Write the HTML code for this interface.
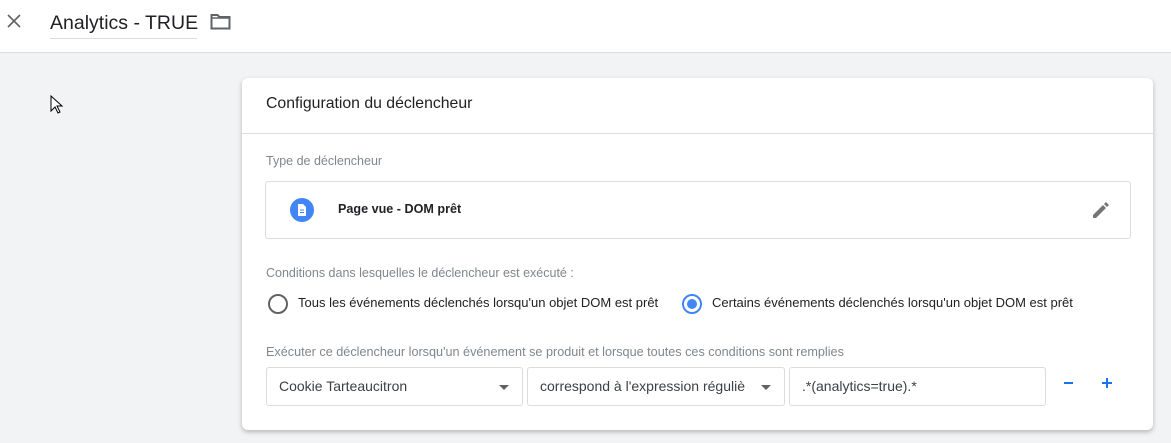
<!DOCTYPE html><html><head><style>
body{margin:0;width:1171px;height:443px;background:#f1f3f4;font-family:"Liberation Sans",Arial,sans-serif;position:relative;overflow:hidden;color:#202124}
.a{position:absolute;white-space:nowrap}
.top{position:absolute;left:0;top:0;width:1171px;height:52px;background:#fff;border-bottom:1px solid #dadce0}
.card{position:absolute;left:242px;top:78px;width:911px;height:352px;background:#fff;border-radius:6px;box-shadow:0 2px 5px rgba(0,0,0,.25)}
.box{position:absolute;border:1px solid #dadce0;border-radius:3px;background:#fff;box-sizing:border-box}
.lab{font-size:12.5px;color:#80868b}
.fld{font-size:14px;color:#3c4043}
</style></head><body>
<div class="top">
<svg class="a" style="left:7px;top:14px" width="14" height="14" viewBox="0 0 14 14"><path d="M1 1L13 13M13 1L1 13" stroke="#5f6368" stroke-width="1.6"/></svg>
<div class="a" style="left:50px;top:12px;font-size:19.5px;color:#202124">Analytics - TRUE</div>
<div class="a" style="left:50px;top:38px;width:147px;height:1px;background:#dadce0"></div>
<svg class="a" style="left:210px;top:13px" width="21" height="17" viewBox="0 0 21 17"><path d="M1.5 2h6l2 2h10v11.5h-18z" fill="none" stroke="#5f6368" stroke-width="2"/><path d="M1.5 5h18" stroke="#5f6368" stroke-width="1.5"/></svg>
</div>
<svg class="a" style="left:50px;top:95px" width="14" height="20" viewBox="0 0 14 20"><path d="M1 1v15l4-4 3 6 2-1-3-6h5z" fill="#fff" stroke="#000" stroke-width="1"/></svg>
<div class="card">
<div class="a" style="left:24px;top:17px;font-size:15.8px;color:#202124">Configuration du déclencheur</div>
<div class="a" style="left:0;top:55px;width:911px;height:1px;background:#dadce0"></div>
<div class="a lab" style="left:24px;top:76px">Type de déclencheur</div>
<div class="box" style="left:23px;top:103px;width:866px;height:58px">
<svg class="a" style="left:24px;top:16px" width="24" height="24" viewBox="0 0 24 24"><circle cx="12" cy="12" r="12" fill="#4285f4"/><path d="M8 6h5l3 3v9H8z" fill="#fff"/><path d="M10 12h4M10 14.5h4" stroke="#4285f4" stroke-width="1"/></svg>
<div class="a" style="left:72px;top:20px;font-size:12.6px;font-weight:bold">Page vue - DOM prêt</div>
<svg class="a" style="left:826px;top:19px" width="18" height="18" viewBox="0 0 18 18"><path d="M1 14v3h3l10-10-3-3zM12 3l3 3 2-2-3-3z" fill="#757575"/></svg>
</div>
<div class="a lab" style="left:24px;top:188px">Conditions dans lesquelles le déclencheur est exécuté :</div>
<div class="a" style="left:26px;top:216px;width:16px;height:16px;border:2px solid #5f6368;border-radius:50%"></div>
<div class="a" style="left:56px;top:217px;font-size:13px">Tous les événements déclenchés lorsqu'un objet DOM est prêt</div>
<div class="a" style="left:440px;top:216px;width:16px;height:16px;border:2px solid #4285f4;border-radius:50%"></div>
<div class="a" style="left:445px;top:221px;width:10px;height:10px;background:#4285f4;border-radius:50%"></div>
<div class="a" style="left:470px;top:217px;font-size:13px">Certains événements déclenchés lorsqu'un objet DOM est prêt</div>
<div class="a lab" style="left:24px;top:267px;font-size:12.65px">Exécuter ce déclencheur lorsqu'un événement se produit et lorsque toutes ces conditions sont remplies</div>
<div class="box" style="left:24px;top:289px;width:257px;height:39px"><div class="a fld" style="left:12px;top:10px">Cookie Tarteaucitron</div><div class="a" style="left:232px;top:17px;border:5px solid transparent;border-top-color:#5f6368;border-bottom:0"></div></div>
<div class="box" style="left:285px;top:289px;width:258px;height:39px;overflow:hidden"><div class="a fld" style="left:12px;top:10px">correspond à l'expression réguliè</div><div class="a" style="left:233px;top:17px;border:5px solid transparent;border-top-color:#5f6368;border-bottom:0"></div></div>
<div class="box" style="left:547px;top:289px;width:257px;height:39px"><div class="a fld" style="left:12px;top:10px">.*(analytics=true).*</div></div>
<div class="a" style="left:822px;top:304px;width:9px;height:2px;background:#1a73e8"></div>
<div class="a" style="left:860px;top:304px;width:10px;height:2px;background:#1a73e8"></div>
<div class="a" style="left:864px;top:300px;width:2px;height:10px;background:#1a73e8"></div>
</div>
</body></html>
